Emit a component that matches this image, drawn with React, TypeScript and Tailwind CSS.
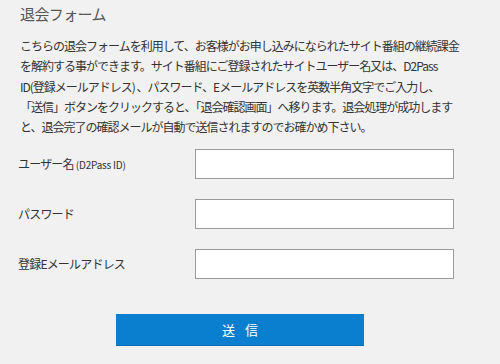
const font = "font-['Noto_Sans_CJK_JP','Liberation_Sans',sans-serif]";

const rows = [
  { id: 'user', label: 'ユーザー名', sub: ' (D2Pass ID)', type: 'text' },
  { id: 'pass', label: 'パスワード', sub: '', type: 'password' },
  { id: 'mail', label: '登録Eメールアドレス', sub: '', type: 'email' },
];

export default function App() {
  return (
    <div className={`h-[364px] w-[500px] overflow-hidden bg-[#f1f1f1] text-[#333] ${font}`}>
      <div className="ml-[18px] w-[444px]">
        <h1 className="pl-[2px] pt-[3px] text-[15px] leading-[22px] text-[#555] tracking-[-0.6px]">
          退会フォーム
        </h1>

        <p className="mt-[11px] whitespace-nowrap pl-[2px] text-[12px] leading-[20.3px] tracking-[-1px]">
          こちらの退会フォームを利用して、お客様がお申し込みになられたサイト番組の継続課金
          <br />
          を解約する事ができます。サイト番組にご登録されたサイトユーザー名又は、D2Pass
          <br />
          ID(登録メールアドレス) 、パスワード、Eメールアドレスを英数半角文字でご入力し、
          <br />
          「送信」ボタンをクリックすると、「退会確認画面」へ移ります。退会処理が成功します
          <br />
          と、退会完了の確認メールが自動で送信されますのでお確かめ下さい。
        </p>

        <form className="mt-[12px]" onSubmit={(e) => e.preventDefault()}>
          <div className="flex flex-col gap-[20px]">
            {rows.map((row) => (
              <div className="flex h-[30px] items-center" key={row.id}>
                <label
                  className="w-[177px] text-[12px] tracking-[-0.8px]"
                  htmlFor={row.id}
                >
                  {row.label}
                  {row.sub ? (
                    <span className="text-[10px] tracking-[-0.2px]">{row.sub}</span>
                  ) : null}
                </label>
                <input
                  className="h-[30px] w-[259px] border border-[#9a9a9a] bg-white px-2 text-[12px] outline-none"
                  id={row.id}
                  type={row.type}
                />
              </div>
            ))}
          </div>

          <div className="mt-[35px] flex justify-center">
            <button
              className="h-[32px] w-[248px] border-b border-[#0a6db3] bg-[#0b7fcf] text-[13px] text-white tracking-[10px] indent-[10px]"
              type="submit"
            >
              送信
            </button>
          </div>
        </form>
      </div>
    </div>
  );
}
